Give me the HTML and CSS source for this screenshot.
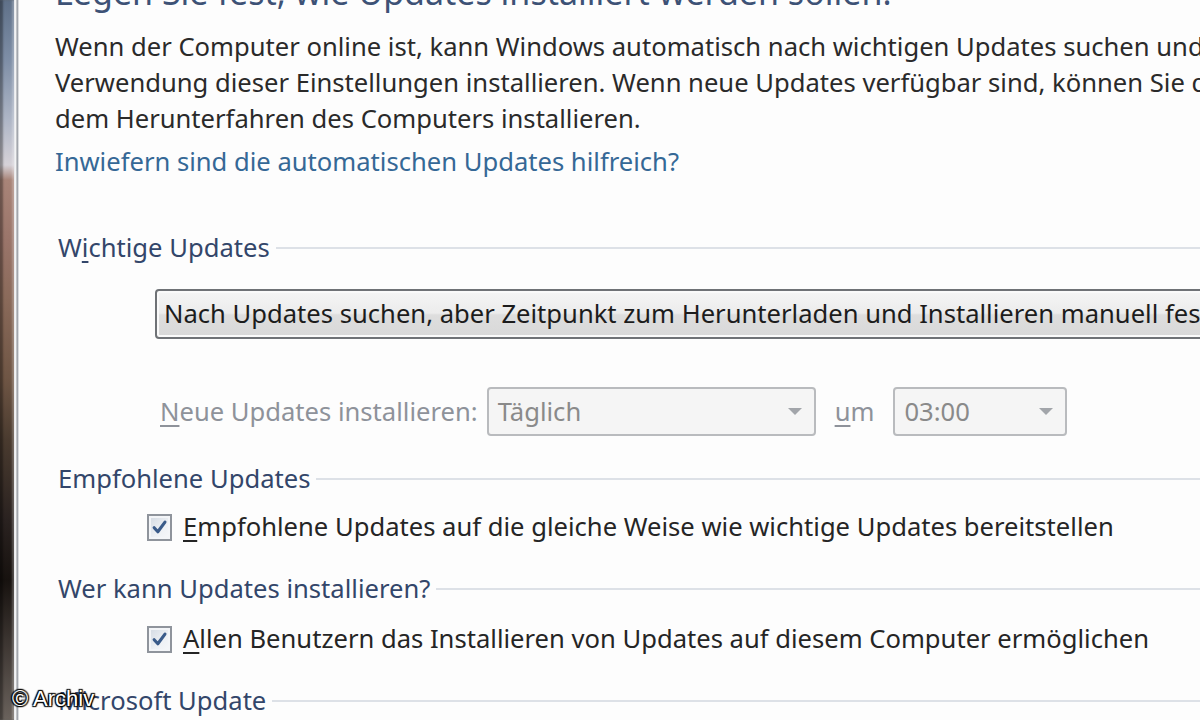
FILE: index.html
```html
<!DOCTYPE html>
<html lang="de">
<head>
<meta charset="utf-8">
<title>Windows Update – Einstellungen ändern</title>
<link rel="stylesheet" href="styles.css">
</head>
<body>
<div class="window">
  <div class="frame"><div class="frame-glass"></div><div class="frame-edge"></div></div>
  <main class="content">
    <h1 class="title">Legen Sie fest, wie Updates installiert werden sollen.</h1>
    <p class="intro">
      <span class="line">Wenn der Computer online ist, kann Windows automatisch nach wichtigen Updates suchen und diese unter</span>
      <span class="line">Verwendung dieser Einstellungen installieren. Wenn neue Updates verfügbar sind, können Sie diese auch vor</span>
      <span class="line">dem Herunterfahren des Computers installieren.</span>
    </p>
    <a class="link" href="#">Inwiefern sind die automatischen Updates hilfreich?</a>

    <div class="group-head group-first"><span class="group-title">W<u>i</u>chtige Updates</span><span class="rule"></span></div>
    <div class="combo">Nach Updates suchen, aber Zeitpunkt zum Herunterladen und Installieren manuell festlegen</div>
    <div class="schedule">
      <span class="disabled-label"><u>N</u>eue Updates installieren:</span>
      <span class="select select-day">Täglich<span class="arrow"></span></span>
      <span class="disabled-label um"><u>u</u>m</span>
      <span class="select select-time">03:00<span class="arrow"></span></span>
    </div>

    <div class="group-head group-rec"><span class="group-title">Empfohlene Updates</span><span class="rule"></span></div>
    <label class="check-row row-rec"><span class="checkbox"><svg viewBox="0 0 16 16"><path d="M3.5 8.2 L6.6 11.6 L12.6 3.4"/></svg></span><span class="check-text"><u>E</u>mpfohlene Updates auf die gleiche Weise wie wichtige Updates bereitstellen</span></label>

    <div class="group-head group-who"><span class="group-title">Wer kann Updates installieren?</span><span class="rule"></span></div>
    <label class="check-row row-who"><span class="checkbox"><svg viewBox="0 0 16 16"><path d="M3.5 8.2 L6.6 11.6 L12.6 3.4"/></svg></span><span class="check-text"><u>A</u>llen Benutzern das Installieren von Updates auf diesem Computer ermöglichen</span></label>

    <div class="group-head group-ms"><span class="group-title">Microsoft Update</span><span class="rule"></span></div>
  </main>
  <div class="watermark">© Archiv</div>
</div>
</body>
</html>
```

FILE: styles.css
```css
html, body {
  margin: 0;
  padding: 0;
  width: 1200px;
  height: 720px;
  overflow: hidden;
  background: #fdfdfd;
}

.window {
  position: relative;
  display: flex;
  width: 1200px;
  height: 720px;
  overflow: hidden;
  font-family: "Noto Sans", "Open Sans", sans-serif;
  font-size: 25.6px;
  line-height: 36px;
  color: #2a2a2a;
}

.frame {
  flex: 0 0 19px;
  display: flex;
}

.frame-glass {
  flex: 0 0 14px;
  background: linear-gradient(to bottom,
    #5f7088 0px, #7e8ea6 60px, #aeb6c6 120px, #d6d2d8 165px,
    #a88478 180px, #9a756a 240px, #8a6a5a 300px, #6e5544 380px,
    #4a3b2f 440px, #2a2220 520px, #17120f 580px, #3b3430 640px, #6a625c 720px);
  box-shadow: inset 3px 0 2px rgba(0,0,0,0.35), inset -2px 0 2px rgba(255,255,255,0.25);
}

.frame-edge {
  flex: 0 0 5px;
  background: linear-gradient(to right, #e4e6ea 0, #f7f7f7 2px, #8b8f96 3px, #b8bcc2 4px, #fbfbfb 5px);
}

.content {
  flex: 1 1 auto;
  min-width: 0;
  padding-left: 36px;
  white-space: nowrap;
  background: #fdfdfd;
}

.title {
  margin: -26px 0 19px 0;
  font-size: 34px;
  line-height: 36px;
  font-weight: normal;
  color: #3d5276;
}

.intro {
  margin: 0;
}

.intro .line {
  display: block;
}

.link {
  display: block;
  margin-top: 7px;
  color: #356896;
  text-decoration: none;
}

.group-head {
  display: flex;
  align-items: center;
  padding-left: 3px;
  color: #33466a;
}

.group-first { margin-top: 50px; }
.group-rec { margin-top: 25px; }
.group-who { margin-top: 26px; }
.group-ms { margin-top: 26px; }

.group-title {
  flex: 0 0 auto;
  padding-right: 6px;
}

.rule {
  flex: 1 1 auto;
  height: 2px;
  background: #dde1e7;
}

u {
  text-decoration: underline;
  text-underline-offset: 4px;
  text-decoration-thickness: 2px;
}

.combo {
  margin: 23px 0 0 100px;
  height: 50px;
  width: 1200px;
  box-sizing: border-box;
  border: 2px solid #6f7276;
  border-radius: 4px;
  padding-left: 7px;
  line-height: 46px;
  color: #1c1c1c;
  background: linear-gradient(to bottom, #f5f5f5 0%, #ececec 48%, #dedede 52%, #d8d8d8 100%);
  box-shadow: inset 0 0 0 2px #fafafa;
}

.schedule {
  display: flex;
  align-items: center;
  margin: 48px 0 0 105px;
  height: 49px;
  color: #8e929a;
}

.disabled-label {
  color: #8e929a;
}

.select {
  position: relative;
  box-sizing: border-box;
  height: 49px;
  border: 2px solid #b9bbbe;
  border-radius: 4px;
  background: #f5f5f5;
  line-height: 45px;
  padding-left: 9px;
  color: #8a8a8a;
}

.select-day {
  margin-left: 9px;
  width: 329px;
}

.um {
  margin-left: 19px;
}

.select-time {
  margin-left: 19px;
  width: 174px;
}

.arrow {
  position: absolute;
  right: 12px;
  top: 19px;
  width: 0;
  height: 0;
  border-left: 7px solid transparent;
  border-right: 7px solid transparent;
  border-top: 7px solid #a2a5aa;
}

.check-row {
  display: flex;
  align-items: center;
  margin-left: 92px;
  color: #252525;
}

.row-rec { margin-top: 12px; }
.row-who { margin-top: 14px; }

.checkbox {
  flex: 0 0 auto;
  width: 25px;
  height: 27px;
  box-sizing: border-box;
  border: 2px solid #8f949c;
  background: linear-gradient(135deg, #d2d9e2 0%, #eef1f5 60%, #f6f7f9 100%);
  box-shadow: inset 0 0 0 2px #f3f5f8;
  display: flex;
  align-items: center;
  justify-content: center;
  margin-right: 11px;
}

.checkbox svg {
  width: 19px;
  height: 19px;
}

.checkbox path {
  fill: none;
  stroke: #3a5b8a;
  stroke-width: 2.6;
  stroke-linecap: round;
  stroke-linejoin: round;
}

.watermark {
  position: absolute;
  left: 12px;
  bottom: 7px;
  font-family: "Liberation Sans", Arial, sans-serif;
  font-size: 22px;
  line-height: 28px;
  color: #ffffff;
  text-shadow: 0 0 2px #000, 1px 1px 1px #000, -1px -1px 1px #000, 1px -1px 1px #000, -1px 1px 1px #000;
}
```
